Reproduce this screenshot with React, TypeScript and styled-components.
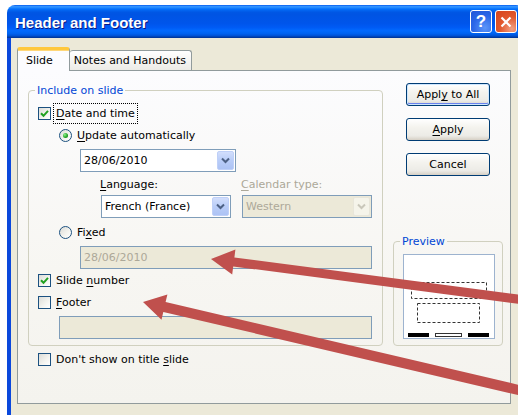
import React from 'react';
import styled, { createGlobalStyle, css } from 'styled-components';

const GlobalStyle = createGlobalStyle`
  html, body {
    margin: 0;
    padding: 0;
    background: #ffffff;
  }
  body {
    font-family: 'DejaVu Sans', 'Liberation Sans', sans-serif;
    font-size: 11px;
    color: #000000;
  }
`;

const Screen = styled.div`
  position: relative;
  width: 518px;
  height: 415px;
  overflow: hidden;
  background: #ffffff;
`;

const Window = styled.div`
  display: flex;
  flex-direction: column;
  width: 517px;
  height: 420px;
  margin: 5px 0 0 7px;
`;

const TitleBar = styled.div`
  display: flex;
  align-items: center;
  height: 33px;
  padding: 0 7px 0 8px;
  border-radius: 8px 8px 0 0;
  background: linear-gradient(
    to bottom,
    #0058ee 0%,
    #3593ff 4%,
    #288eff 7%,
    #127dff 10%,
    #036ffc 13%,
    #0262ee 17%,
    #0057e5 22%,
    #0054e3 28%,
    #0055eb 56%,
    #005bf5 68%,
    #026afe 78%,
    #0062ef 87%,
    #0052d6 93%,
    #0040ab 97%,
    #003092 100%
  );
`;

const Title = styled.div`
  flex: 1;
  font-family: 'Liberation Sans', Arial, sans-serif;
  font-size: 15px;
  font-weight: bold;
  color: #ffffff;
  text-shadow: 1px 1px 0 #0a1883;
  padding-top: 1px;
`;

const CaptionButton = styled.div<{ $kind: 'help' | 'close' }>`
  width: 22px;
  height: 23px;
  box-sizing: border-box;
  margin-left: 3px;
  border: 1px solid #ffffff;
  border-radius: 3px;
  display: flex;
  align-items: center;
  justify-content: center;
  color: #ffffff;
  ${(p) =>
    p.$kind === 'help'
      ? css`
          background: radial-gradient(circle at 70% 80%, #5b95f9 0%, #2a67e8 55%, #1f55d6 100%);
          font-family: 'Liberation Sans', Arial, sans-serif;
          font-size: 17px;
          font-weight: bold;
        `
      : css`
          background: radial-gradient(circle at 80% 85%, #f2a184 0%, #e2582d 50%, #d4431c 100%);
        `}
`;

const Frame = styled.div`
  flex: 1;
  display: flex;
  flex-direction: column;
  background: #ece9d8;
  border-left: 4px solid #0a48dc;
  border-right: 4px solid #0a48dc;
  padding: 9px 9px 0 6px;
`;

const TabStrip = styled.div`
  display: flex;
  align-items: flex-end;
  height: 23px;
`;

const Tab = styled.div<{ $active?: boolean }>`
  box-sizing: border-box;
  display: flex;
  align-items: center;
  border: 1px solid #919b9c;
  border-bottom: none;
  border-radius: 3px 3px 0 0;
  ${(p) =>
    p.$active
      ? css`
          height: 24px;
          margin-bottom: -1px;
          padding: 0 16px 0 8px;
          background: #fcfcfe;
          border-top: 3px solid #ffc83c;
          box-shadow: inset 0 1px 0 #ffd778;
          position: relative;
          z-index: 1;
        `
      : css`
          height: 20px;
          padding: 0 5px 0 4px;
          background: linear-gradient(#ffffff, #ecebe6);
          border-left: none;
        `}
`;

const Panel = styled.div`
  box-sizing: border-box;
  width: 494px;
  height: 334px;
  border: 1px solid #919b9c;
  background: linear-gradient(#fcfcfe 0%, #f7f6f2 60%, #f4f3ee 100%);
  padding: 12px 7px 0 10px;
  display: grid;
  grid-template-columns: 355px 110px;
  grid-template-rows: auto auto;
  column-gap: 10px;
  align-content: start;
`;

const Group = styled.fieldset<{ $pad: string }>`
  margin: 0;
  min-width: 0;
  padding: ${(p) => p.$pad};
  border: 1px solid #d0d0bf;
  border-radius: 4px;
  display: flex;
  flex-direction: column;
`;

const Legend = styled.legend`
  color: #0046d5;
  padding: 0 2px;
  margin-left: -3px;
  line-height: 15px;
`;

const Row = styled.div<{ $mt?: number; $ml?: number; $h?: number }>`
  display: flex;
  align-items: center;
  height: ${(p) => p.$h ?? 20}px;
  margin-top: ${(p) => p.$mt ?? 0}px;
  margin-left: ${(p) => p.$ml ?? 0}px;
`;

const Box = styled.span`
  box-sizing: border-box;
  width: 13px;
  height: 13px;
  flex: none;
  border: 1px solid #1c5180;
  background: linear-gradient(135deg, #dcdcd7 0%, #f4f4f0 60%, #ffffff 100%);
  display: flex;
  align-items: center;
  justify-content: center;
`;

const Round = styled(Box)`
  border-radius: 50%;
`;

const Dot = styled.span`
  width: 5px;
  height: 5px;
  border-radius: 50%;
  background: radial-gradient(circle at 35% 35%, #8ef28e 0%, #21a121 60%, #147014 100%);
`;

const Label = styled.span<{ $focus?: boolean; $gap?: number; $muted?: boolean }>`
  margin-left: ${(p) => p.$gap ?? 3}px;
  padding: 3px 2px;
  line-height: 13px;
  white-space: nowrap;
  color: ${(p) => (p.$muted ? '#aca899' : '#000000')};
  outline: ${(p) => (p.$focus ? '1px dotted #000000' : 'none')};
`;

const Field = styled.div<{ $w: number; $disabled?: boolean }>`
  box-sizing: border-box;
  width: ${(p) => p.$w}px;
  height: 23px;
  border: 1px solid #7f9db9;
  background: ${(p) => (p.$disabled ? '#ece9d8' : '#ffffff')};
  color: ${(p) => (p.$disabled ? '#aca899' : '#000000')};
  display: flex;
  align-items: center;
  padding-left: 3px;
  white-space: nowrap;
  flex: none;
`;

const FieldText = styled.span`
  flex: 1;
`;

const DropButton = styled.span<{ $disabled?: boolean }>`
  box-sizing: border-box;
  width: 17px;
  height: 19px;
  margin-right: 1px;
  border-radius: 2px;
  display: flex;
  align-items: center;
  justify-content: center;
  ${(p) =>
    p.$disabled
      ? css`
          background: #f5f4ea;
          border: 1px solid #e8e6da;
        `
      : css`
          background: linear-gradient(#d2defc 0%, #b9cdf8 50%, #adc3f5 100%);
          border: 1px solid #bfd0f8;
        `}
`;

const FieldLabel = styled.span<{ $w: number; $muted?: boolean }>`
  width: ${(p) => p.$w}px;
  flex: none;
  color: ${(p) => (p.$muted ? '#aca899' : '#000000')};
`;

const SideColumn = styled.div`
  display: flex;
  flex-direction: column;
  justify-content: space-between;
`;

const ButtonStack = styled.div`
  display: flex;
  flex-direction: column;
  gap: 12px;
  margin-left: 13px;
`;

const PushButton = styled.div<{ $default?: boolean }>`
  box-sizing: border-box;
  width: 84px;
  height: 23px;
  border: 1px solid #003c74;
  border-radius: 3px;
  background: linear-gradient(#ffffff 0%, #f4f3ee 40%, #ecebe6 80%, #d6d0c5 100%);
  display: flex;
  align-items: center;
  justify-content: center;
  white-space: nowrap;
  ${(p) =>
    p.$default &&
    css`
      box-shadow: inset 0 0 0 1px #cee7ff, inset 0 -1px 0 1px #6982ee;
    `}
`;

const Underline = styled.u`
  text-decoration-thickness: 1px;
  text-underline-offset: 2px;
`;

const Overlay = styled.svg`
  position: absolute;
  top: 0;
  left: 0;
  pointer-events: none;
`;

type Pt = [number, number];

const arrowPoints = (tip: Pt, tail: Pt, width: number, headLen: number, headW: number) => {
  const dx = tip[0] - tail[0];
  const dy = tip[1] - tail[1];
  const len = Math.hypot(dx, dy);
  const ux = dx / len;
  const uy = dy / len;
  const nx = -uy;
  const ny = ux;
  const bx = tip[0] - ux * headLen;
  const by = tip[1] - uy * headLen;
  const pts: Pt[] = [
    [tail[0] + (nx * width) / 2, tail[1] + (ny * width) / 2],
    [bx + (nx * width) / 2, by + (ny * width) / 2],
    [bx + (nx * headW) / 2, by + (ny * headW) / 2],
    tip,
    [bx - (nx * headW) / 2, by - (ny * headW) / 2],
    [bx - (nx * width) / 2, by - (ny * width) / 2],
    [tail[0] - (nx * width) / 2, tail[1] - (ny * width) / 2],
  ];
  return pts.map((p) => `${p[0].toFixed(1)},${p[1].toFixed(1)}`).join(' ');
};

const Chevron = ({ muted }: { muted?: boolean }) => (
  <svg width="9" height="7" viewBox="0 0 9 7">
    <path
      d="M1 1.5 L4.5 5 L8 1.5"
      fill="none"
      stroke={muted ? '#c9c7ba' : '#4d6185'}
      strokeWidth="2"
    />
  </svg>
);

const CheckBox = ({ checked }: { checked?: boolean }) => (
  <Box>
    {checked && (
      <svg width="9" height="9" viewBox="0 0 9 9">
        <path d="M1 4.2 L3.5 6.8 L8 1.8" fill="none" stroke="#21a121" strokeWidth="2" />
      </svg>
    )}
  </Box>
);

const Radio = ({ checked }: { checked?: boolean }) => <Round>{checked && <Dot />}</Round>;

const Combo = ({ w, value, disabled }: { w: number; value: string; disabled?: boolean }) => (
  <Field $w={w} $disabled={disabled}>
    <FieldText>{value}</FieldText>
    <DropButton $disabled={disabled}>
      <Chevron muted={disabled} />
    </DropButton>
  </Field>
);

const PreviewPicture = () => (
  <svg width="92" height="85" viewBox="0 0 92 85">
    <rect x="0.5" y="0.5" width="91" height="84" fill="#ffffff" stroke="#9db3cf" />
    <rect x="8.5" y="28.5" width="75" height="16" fill="none" stroke="#333333" strokeDasharray="3 2" />
    <rect x="14.5" y="49.5" width="62" height="19" fill="none" stroke="#333333" strokeDasharray="3 2" />
    <rect x="5" y="79" width="21" height="4" fill="#000000" />
    <rect x="32.5" y="79.5" width="26" height="3" fill="#ffffff" stroke="#333333" />
    <rect x="65" y="79" width="21" height="4" fill="#000000" />
  </svg>
);

export default function App() {
  return (
    <Screen>
      <GlobalStyle />
      <Window>
        <TitleBar>
          <Title>Header and Footer</Title>
          <CaptionButton $kind="help">?</CaptionButton>
          <CaptionButton $kind="close">
            <svg width="12" height="12" viewBox="0 0 12 12">
              <path d="M1.5 1.5 L10.5 10.5 M10.5 1.5 L1.5 10.5" stroke="#ffffff" strokeWidth="2.2" />
            </svg>
          </CaptionButton>
        </TitleBar>
        <Frame>
          <TabStrip>
            <Tab $active>Slide</Tab>
            <Tab>Notes and Handouts</Tab>
          </TabStrip>
          <Panel>
            <Group $pad="0 9px 6px 9px">
              <Legend>Include on slide</Legend>
              <Row $mt={5}>
                <CheckBox checked />
                <Label $focus>
                  <Underline>D</Underline>ate and time
                </Label>
              </Row>
              <Row $mt={2} $ml={21}>
                <Radio checked />
                <Label $gap={3}>
                  <Underline>U</Underline>pdate automatically
                </Label>
              </Row>
              <Row $mt={4} $ml={42} $h={23}>
                <Combo w={156} value="28/06/2010" />
              </Row>
              <Row $mt={5} $ml={62} $h={15}>
                <FieldLabel $w={141}>
                  <Underline>L</Underline>anguage:
                </FieldLabel>
                <FieldLabel $w={130} $muted>
                  <Underline>C</Underline>alendar type:
                </FieldLabel>
              </Row>
              <Row $mt={3} $ml={63} $h={23}>
                <Combo w={130} value="French (France)" />
                <Row $ml={11} $h={23}>
                  <Combo w={130} value="Western" disabled />
                </Row>
              </Row>
              <Row $mt={4} $ml={21}>
                <Radio />
                <Label $gap={3}>
                  Fi<Underline>x</Underline>ed
                </Label>
              </Row>
              <Row $mt={4} $ml={42} $h={23}>
                <Field $w={292} $disabled>
                  28/06/2010
                </Field>
              </Row>
              <Row $mt={1}>
                <CheckBox checked />
                <Label>
                  Slide <Underline>n</Underline>umber
                </Label>
              </Row>
              <Row $mt={2}>
                <CheckBox />
                <Label>
                  <Underline>F</Underline>ooter
                </Label>
              </Row>
              <Row $mt={4} $ml={21} $h={23}>
                <Field $w={313} $disabled />
              </Row>
            </Group>

            <SideColumn>
              <ButtonStack>
                <PushButton $default>
                  Appl<Underline>y</Underline>&nbsp;to All
                </PushButton>
                <PushButton>
                  <Underline>A</Underline>pply
                </PushButton>
                <PushButton>Cancel</PushButton>
              </ButtonStack>
              <Group $pad="5px 7px 6px 9px">
                <Legend>Preview</Legend>
                <PreviewPicture />
              </Group>
            </SideColumn>

            <Row $mt={3} $ml={10}>
              <CheckBox />
              <Label>
                Don't show on title <Underline>s</Underline>lide
              </Label>
            </Row>
          </Panel>
        </Frame>
      </Window>

      <Overlay width="518" height="415" viewBox="0 0 518 415">
        <polygon points={arrowPoints([211, 259], [540, 302], 9, 23, 25)} fill="#c0504d" />
        <polygon points={arrowPoints([143, 302], [540, 395], 10, 22, 26)} fill="#c0504d" />
      </Overlay>
    </Screen>
  );
}
